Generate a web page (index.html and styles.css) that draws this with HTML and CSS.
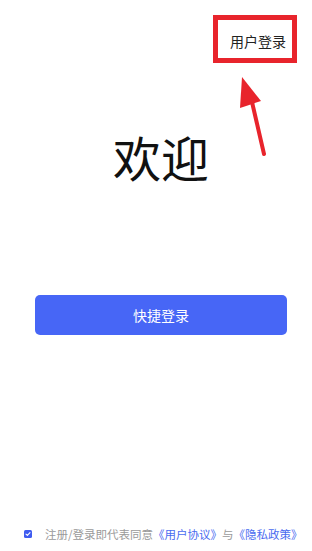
FILE: index.html
```html
<!DOCTYPE html>
<html lang="zh-CN">
<head>
<meta charset="utf-8">
<title>欢迎</title>
<link rel="stylesheet" href="styles.css">
</head>
<body>
<div class="page">
  <header class="topbar">
    <a class="login-link">用户登录</a>
  </header>
  <main class="content">
    <h1 class="welcome">欢迎</h1>
    <button class="quick-btn">快捷登录</button>
  </main>
  <footer class="agreement">
    <span class="check">
      <svg width="8" height="8" viewBox="0 0 8 8"><path d="M2 4.1 L3.4 5.4 L6 2.7" fill="none" stroke="#fff" stroke-width="1.1" stroke-linecap="round" stroke-linejoin="round"/></svg>
    </span>
    <span class="agree-text">注册/登录即代表同意<span class="link">《用户协议》</span>与<span class="link">《隐私政策》</span></span>
  </footer>
  <svg class="arrow" width="34" height="84" viewBox="0 0 34 84">
    <line x1="16" y1="28" x2="28" y2="80" stroke="#e8242c" stroke-width="4" stroke-linecap="round"/>
    <polygon points="6,3 4,34 25,27" fill="#e8242c"/>
  </svg>
</div>
</body>
</html>
```

FILE: styles.css
```css
* { box-sizing: border-box; }
html, body { margin: 0; padding: 0; background: #fff; }
body { font-family: "Noto Sans CJK SC", "Noto Sans", sans-serif; }
.page {
  position: relative;
  width: 312px;
  height: 551px;
  display: flex;
  flex-direction: column;
  overflow: hidden;
}
.topbar {
  display: flex;
  justify-content: flex-end;
  padding: 15px 15px 0 0;
}
.login-link {
  width: 84px;
  height: 48px;
  border: 5px solid #e8242c;
  display: flex;
  align-items: center;
  justify-content: center;
  padding: 4px 0 0 6px;
  font-size: 14px;
  color: #222;
  line-height: 1;
}
.content {
  padding: 0 25px 0 35px;
  display: flex;
  flex-direction: column;
}
.welcome {
  margin: 69px 0 0;
  font-size: 48px;
  font-weight: 400;
  line-height: 48px;
  text-align: center;
  color: #111;
}
.quick-btn {
  margin-top: 115px;
  height: 40px;
  width: 100%;
  border: 0;
  border-radius: 5px;
  background: #4766f6;
  color: #fff;
  font-family: inherit;
  font-size: 14px;
  padding: 0;
}
.agreement {
  margin-top: auto;
  padding: 0 0 9px 24px;
  display: flex;
  align-items: center;
  height: 25px;
}
.check {
  width: 8px;
  height: 8px;
  border-radius: 1.5px;
  background: #3f5cf0;
  display: flex;
  margin-right: 13px;
}
.check svg { display: block; }
.agree-text {
  font-size: 11.5px;
  color: #9a9a9a;
  line-height: 16px;
  white-space: nowrap;
}
.link { color: #4a6cf0; }
.arrow {
  position: absolute;
  left: 236px;
  top: 74px;
}
```
